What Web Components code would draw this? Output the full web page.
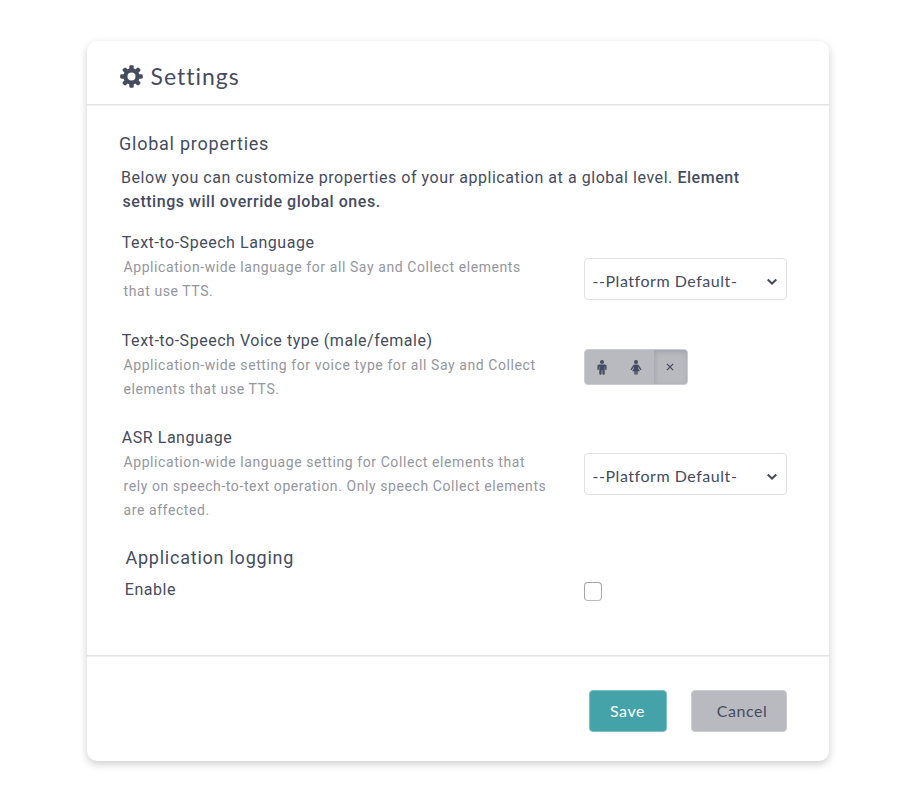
<!DOCTYPE html>
<html lang="en">
<head>
<meta charset="utf-8">
<title>Settings</title>
<style>
body{display:flow-root;box-sizing:border-box;min-height:811px;margin:0;background:#fff;color:#454c60;font-family:Roboto,sans-serif;font-size:16px;line-height:24px;letter-spacing:.54px}
</style>
</head>
<body>
<settings-card>
  <card-header slot="header">Settings</card-header>
  <section-title>Global properties</section-title>
  <intro-text>
    <span>Below you can customize properties of your application at a global level. <b>Element</b></span>
    <b slot="second">settings will override global ones.</b>
  </intro-text>
  <setting-row label="Text-to-Speech Language">
    <span slot="help">Application-wide language for all Say and Collect elements<br>that use TTS.</span>
    <select-box style="margin-top:27px">--Platform Default-</select-box>
  </setting-row>
  <setting-row label="Text-to-Speech Voice type (male/female)" style="margin-top:26px">
    <span slot="help">Application-wide setting for voice type for all Say and Collect<br>elements that use TTS.</span>
    <voice-toggle style="margin-top:20px"></voice-toggle>
  </setting-row>
  <setting-row label="ASR Language" style="margin-top:25px">
    <span slot="help">Application-wide language setting for Collect elements that<br>rely on speech-to-text operation. Only speech Collect elements<br>are affected.</span>
    <select-box style="margin-top:27px">--Platform Default-</select-box>
  </setting-row>
  <section-title style="margin-top:24px;--indent:6px">Application logging</section-title>
  <setting-row label="Enable" style="margin-top:8px;--label-indent:5.3px">
    <check-box style="margin-top:4px"></check-box>
  </setting-row>
  <action-button slot="footer" style="width:78px">Save</action-button>
  <action-button slot="footer" muted style="width:96px">Cancel</action-button>
</settings-card>
<script>
const define = (name, markup, setup) => customElements.define(name, class extends HTMLElement {
  connectedCallback() {
    if (this.shadowRoot) return;
    const template = document.createElement('template');
    template.innerHTML = markup;
    this.attachShadow({mode: 'open'}).append(template.content.cloneNode(true));
    if (setup) setup(this);
  }
});

define('settings-card', `<style>
:host{display:flex;flex-direction:column;box-sizing:border-box;width:742px;height:720px;margin:41px 0 0 87px;border-radius:10px;background:#fff;box-shadow:0 3px 9px rgba(0,0,0,.2)}
header{box-sizing:border-box;height:64px;padding:22px 33px 0;border-bottom:1px solid #e2e3e5;box-shadow:0 1px #f0f0f1}
main{flex:1;padding:27px 42px 0 32.5px}
footer{box-sizing:border-box;height:106px;display:flex;justify-content:flex-end;align-items:flex-start;gap:24px;padding:34px 42px 0;border-top:1px solid #e2e3e5;box-shadow:inset 0 1px #f0f0f1}
</style><header><slot name="header"></slot></header><main><slot></slot></main><footer><slot name="footer"></slot></footer>`);

define('card-header', `<style>
:host{display:flex;align-items:center;gap:7.5px;font:400 23px/26px Lato,sans-serif;letter-spacing:1px}
svg{display:block;width:23px;height:23px}
</style><svg viewBox="-12 -12 24 24" fill="#454c60"><defs><g id="pair"><rect x="-2.3" y="-11.8" width="4.6" height="7" rx="1.4"/><rect x="-2.3" y="4.8" width="4.6" height="7" rx="1.4"/></g></defs>
<use href="#pair"/><use href="#pair" transform="rotate(45)"/><use href="#pair" transform="rotate(90)"/><use href="#pair" transform="rotate(135)"/><path fill-rule="evenodd" d="M0-8.5A8.5 8.5 0 1 1 0 8.5A8.5 8.5 0 1 1 0-8.5ZM0-4.2A4.2 4.2 0 1 0 0 4.2A4.2 4.2 0 1 0 0-4.2Z"/></svg><slot></slot>`);

define('section-title', `<style>
:host{display:block;font-size:18px;line-height:24px;letter-spacing:.76px}
span{display:block;margin-left:var(--indent,-.5px)}
</style><span><slot></slot></span>`);

define('intro-text', `<style>
:host{display:block;margin:10px 0 17px;padding-left:1.5px;white-space:nowrap;letter-spacing:.55px}
div + div{padding-left:1.5px;letter-spacing:.54px}
::slotted(b){font-weight:500}
</style><div><slot></slot></div><div><slot name="second"></slot></div>`, el => {
  el.querySelectorAll('b').forEach(b => b.style.fontWeight = 500);
});

define('setting-row', `<style>
:host{display:grid;grid-template-columns:464.5px auto;justify-content:start;align-items:start}
.label{padding-left:var(--label-indent,2.3px)}
.help{padding-left:4px;font-size:14px;letter-spacing:.585px;color:#9496a0;white-space:nowrap}
</style><div><div class="label"></div><div class="help"><slot name="help"></slot></div></div><slot></slot>`, el => {
  el.shadowRoot.querySelector('.label').textContent = el.getAttribute('label');
});

define('select-box', `<style>
:host{box-sizing:border-box;display:flex;align-items:center;justify-content:space-between;width:203px;height:42px;padding:4px 8px 0 7.5px;border:1px solid #e0e1e4;border-radius:4px;font:400 16px/24px Lato,sans-serif;letter-spacing:.54px}
svg{width:12px;height:8px;margin-top:2px}
</style><slot></slot><svg viewBox="0 0 12 8" fill="none" stroke="#454c60" stroke-width="2"><path d="M1.7 1.6 6 5.6 10.3 1.6"/></svg>`);

define('voice-toggle', `<style>
:host{box-sizing:border-box;display:grid;grid-template-columns:34px 35px 33px;width:104px;height:36px;border-radius:4px;overflow:hidden;background:#b9bac0;border:1px solid #cbccd1}
span{display:flex;align-items:center;justify-content:center}
span:first-child{padding-right:2px}
span:nth-child(n+2){padding-right:1px}
span:last-child{box-shadow:inset 1px 2px 5px rgba(69,76,96,.22)}
svg{display:block}
</style>
<span><svg width="10" height="15" viewBox="0 0 10 15" fill="#454c60"><circle cx="5" cy="2" r="2"/><path d="M2 4.4H8Q9.6 4.4 9.6 6V9.3Q9.6 10 8.9 10T8.1 9.3V6.5H7.7V14Q7.7 14.8 6.6 14.8T5.4 14V10.2H4.6V14Q4.6 14.8 3.4 14.8T2.3 14V6.5H1.9V9.3Q1.9 10 1.1 10T.4 9.3V6Q.4 4.4 2 4.4Z"/></svg></span>
<span><svg width="12" height="15" viewBox="0 0 12 15" fill="#454c60"><circle cx="6" cy="2" r="2"/><path d="M4.7 4.4H7.3Q8.1 4.4 8.6 5.1L11.3 9Q11.6 9.6 11.1 9.9 10.5 10.2 10.1 9.7L8 6.8V7.9L10 11.3H7.7V14Q7.7 14.8 6.9 14.8T6.2 14V11.3H5.8V14Q5.8 14.8 5.1 14.8T4.3 14V11.3H2L4 7.9V6.8L1.9 9.7Q1.5 10.2.9 9.9.4 9.6.7 9L3.4 5.1Q3.9 4.4 4.7 4.4Z"/></svg></span>
<span><svg width="8" height="8" viewBox="0 0 8 8" fill="none" stroke="#454c60" stroke-width="1.3"><path d="M.9.9 7.1 7.1M7.1.9.9 7.1"/></svg></span>`);

define('check-box', `<style>
:host{box-sizing:border-box;display:block;width:18px;height:19px;border:1px solid #a5a6ac;border-bottom-color:#b9bac0;border-radius:4px;background:#fff}
</style>`);

define('action-button', `<style>
:host{box-sizing:border-box;display:flex;align-items:center;justify-content:center;height:42px;padding-right:1px;border:1px solid #7cc0c4;border-radius:4px;background:#44a3a9;color:#fff;font:400 16px/24px Lato,sans-serif;letter-spacing:.57px}
:host([muted]){background:#b9bac0;border-color:#cbccd1;color:#454c60;padding-left:7px}
</style><slot></slot>`);
</script>
</body>
</html>
